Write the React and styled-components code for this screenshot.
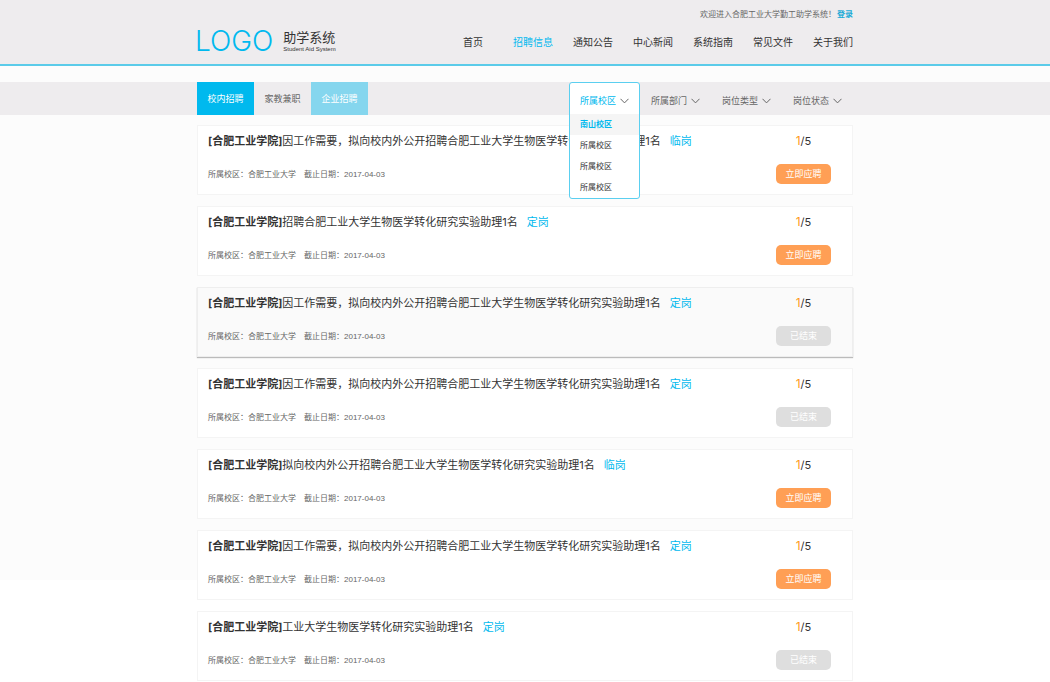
import React, { useState } from 'react';
import styled, { createGlobalStyle, css } from 'styled-components';

// styled-components
const GlobalStyle = createGlobalStyle`
  * {
    box-sizing: border-box;
  }

  body {
    margin: 0;
    background: #fff;
    color: #333;
    font-family: Inter, 'Noto Sans CJK SC', sans-serif;
    font-size: 8px;
  }

  h1, h2, p, ul {
    margin: 0;
    padding: 0;
    list-style: none;
    font-weight: 400;
  }

  a {
    color: inherit;
    text-decoration: none;
  }

  button, select {
    margin: 0;
    padding: 0;
    border: 0;
    font-family: inherit;
    cursor: pointer;
  }
`;

const Page = styled.div`
  background: linear-gradient(#fcfcfc 580px, #fff 580px);
`;

const Container = styled.div`
  width: 100%;
  max-width: 656px;
  margin: 0 auto;
`;

const Header = styled.header`
  background: #eeecee;
  border-bottom: 2px solid #5bcbe9;
`;

const HeaderInner = styled(Container)`
  display: flex;
  justify-content: space-between;
  align-items: flex-end;
  height: 64px;
`;

const Brand = styled.a`
  display: flex;
  align-items: center;
  gap: 10px;
  padding-bottom: 7px;
`;

const Logo = styled.span`
  margin-left: -2px;
  color: #00b9ee;
  font-size: 28px;
  font-weight: 300;
  line-height: 32px;
`;

const SiteName = styled.h1`
  font-size: 13px;
  line-height: 15px;
`;

const SiteSubName = styled.p`
  font-family: 'Liberation Sans', Arial, sans-serif;
  font-size: 6px;
  line-height: 8px;
`;

const HeaderRight = styled.div`
  display: flex;
  flex-direction: column;
  align-items: flex-end;
  gap: 14px;
  padding-bottom: 14px;
`;

const Welcome = styled.p`
  color: #666;
  line-height: 12px;
`;

const Login = styled.a`
  margin-left: 1px;
  color: #1aaad6;
  font-weight: 700;
`;

const Nav = styled.nav`
  display: flex;
  gap: 20px;
`;

const NavLink = styled.a`
  min-width: 40px;
  text-align: center;
  font-size: 10px;
  line-height: 16px;
  color: ${({ $active }) => ($active ? '#00b9ee' : '#333')};
`;

const FilterBar = styled.div`
  margin-top: 16px;
  background: #eeecee;
`;

const FilterInner = styled(Container)`
  display: flex;
  justify-content: space-between;
  height: 33px;
`;

const Group = styled.div`
  display: flex;
`;

const tabColors = {
  active: css`
    background: #00b9ee;
    color: #fff;
  `,
  hover: css`
    background: #85d6ee;
    color: #fff;
  `,
  normal: css`
    background: transparent;
    color: #666;
  `,
};

const Tab = styled.button`
  width: 57px;
  font-size: 9px;
  line-height: 33px;
  ${({ $state }) => tabColors[$state]}
`;

const Filter = styled.div`
  position: relative;
  display: flex;
  width: 71px;
  color: #666;
`;

const FilterSelect = styled.select`
  appearance: none;
  width: 100%;
  padding: 4px 11px 0;
  background: transparent;
  color: inherit;
  font-size: 9px;
`;

const ArrowIcon = styled.svg`
  position: absolute;
  top: 16px;
  right: 11px;
  z-index: 2;
  width: 9px;
  height: 6px;
  fill: none;
  stroke: #666;
  pointer-events: none;
`;

const Dropdown = styled.div`
  position: absolute;
  inset: 0 0 auto;
  z-index: 1;
  overflow: hidden;
  border: 1px solid #5bcff0;
  border-radius: 3px;
  background: #fff;
`;

const DropdownHead = styled.button`
  display: block;
  width: 100%;
  height: 31px;
  padding: 4px 10px 0;
  background: transparent;
  color: #00b9ee;
  font-size: 9px;
  text-align: left;
`;

const Option = styled.button`
  display: block;
  width: 100%;
  padding: 0 10px;
  background: ${({ $selected }) => ($selected ? '#f5f5f5' : 'transparent')};
  color: ${({ $selected }) => ($selected ? '#00b9ee' : '#333')};
  font-size: 8px;
  font-weight: ${({ $selected }) => ($selected ? 700 : 400)};
  line-height: 21px;
  text-align: left;
`;

const JobList = styled(Container).attrs({ as: 'ul' })`
  display: grid;
  gap: 11px;
  padding-top: 10px;
`;

const Card = styled.li`
  display: flex;
  justify-content: space-between;
  height: 70px;
  padding: 6px 21px 10px 10px;
  border: 1px solid #f4f4f4;
  background: #fff;

  ${({ $raised }) =>
    $raised &&
    css`
      border-color: #eee;
      background: #fafafa;
      box-shadow: 0 1px 1px 0 #bbb;
    `}
`;

const CardColumn = styled.div`
  display: flex;
  flex-direction: column;
  justify-content: space-between;
  align-items: ${({ $center }) => ($center ? 'center' : 'flex-start')};
`;

const Title = styled.h2`
  font-size: 11px;
  line-height: 18px;
`;

const School = styled.strong`
  font-weight: 700;
`;

const Tag = styled.span`
  margin-left: 9px;
  color: #00b9ee;
`;

const Info = styled.p`
  display: flex;
  gap: 8px;
  color: #666;
  font-family: 'Liberation Sans', 'Noto Sans CJK SC', sans-serif;
  line-height: 18px;
`;

const Count = styled.p`
  font-size: 11px;
  line-height: 18px;
`;

const Hired = styled.span`
  color: #ff9a1a;
  font-size: 12px;
`;

const ApplyButton = styled.button`
  width: 55px;
  border-radius: 5px;
  background: #ff9f55;
  color: #fff;
  font-size: 9px;
  line-height: 20px;

  &:disabled {
    background: #dedede;
    cursor: default;
  }
`;
// end styled-components

const navItems = ['首页', '招聘信息', '通知公告', '中心新闻', '系统指南', '常见文件', '关于我们'];

const tabs = [
  { name: '校内招聘', state: 'active' },
  { name: '家教兼职', state: 'normal' },
  { name: '企业招聘', state: 'hover' },
];

const campuses = ['南山校区', '所属校区', '所属校区', '所属校区'];

const filters = ['所属部门', '岗位类型', '岗位状态'];

const longTitle = '因工作需要，拟向校内外公开招聘合肥工业大学生物医学转化研究实验助理1名';

const jobs = [
  { title: longTitle, tag: '临岗', open: true },
  { title: '招聘合肥工业大学生物医学转化研究实验助理1名', tag: '定岗', open: true },
  { title: longTitle, tag: '定岗', open: false, raised: true },
  { title: longTitle, tag: '定岗', open: false },
  { title: '拟向校内外公开招聘合肥工业大学生物医学转化研究实验助理1名', tag: '临岗', open: true },
  { title: longTitle, tag: '定岗', open: true },
  { title: '工业大学生物医学转化研究实验助理1名', tag: '定岗', open: false },
];

const Arrow = () => (
  <ArrowIcon viewBox="0 0 9 6" aria-hidden="true">
    <path d="M0.5 0.8 L4.5 4.9 L8.5 0.8" />
  </ArrowIcon>
);

const CampusFilter = () => {
  const [open, setOpen] = useState(true);
  const [selected, setSelected] = useState(0);

  return (
    <Filter>
      <Dropdown>
        <DropdownHead aria-expanded={open} onClick={() => setOpen(!open)}>
          所属校区
        </DropdownHead>
        {open &&
          campuses.map((campus, index) => (
            <Option key={index} $selected={index === selected} onClick={() => setSelected(index)}>
              {campus}
            </Option>
          ))}
      </Dropdown>
      <Arrow />
    </Filter>
  );
};

const JobCard = ({ job }) => (
  <Card $raised={job.raised}>
    <CardColumn>
      <Title>
        <School>[合肥工业学院]</School>
        {job.title}
        <Tag>{job.tag}</Tag>
      </Title>
      <Info>
        <span>所属校区：合肥工业大学</span>
        <span>截止日期：2017-04-03</span>
      </Info>
    </CardColumn>
    <CardColumn $center>
      <Count>
        <Hired>1</Hired>/5
      </Count>
      <ApplyButton disabled={!job.open}>{job.open ? '立即应聘' : '已结束'}</ApplyButton>
    </CardColumn>
  </Card>
);

const App = () => {
  return (
    <Page>
      <GlobalStyle />
      <Header>
        <HeaderInner>
          <Brand href="#">
            <Logo>LOGO</Logo>
            <div>
              <SiteName>助学系统</SiteName>
              <SiteSubName>Student Aid System</SiteSubName>
            </div>
          </Brand>
          <HeaderRight>
            <Welcome>
              欢迎进入合肥工业大学勤工助学系统！<Login href="#">登录</Login>
            </Welcome>
            <Nav>
              {navItems.map(item => (
                <NavLink key={item} href="#" $active={item === '招聘信息'}>
                  {item}
                </NavLink>
              ))}
            </Nav>
          </HeaderRight>
        </HeaderInner>
      </Header>
      <FilterBar>
        <FilterInner>
          <Group>
            {tabs.map(tab => (
              <Tab key={tab.name} $state={tab.state}>
                {tab.name}
              </Tab>
            ))}
          </Group>
          <Group>
            <CampusFilter />
            {filters.map(name => (
              <Filter key={name}>
                <FilterSelect aria-label={name}>
                  <option>{name}</option>
                </FilterSelect>
                <Arrow />
              </Filter>
            ))}
          </Group>
        </FilterInner>
      </FilterBar>
      <JobList>
        {jobs.map((job, index) => (
          <JobCard key={index} job={job} />
        ))}
      </JobList>
    </Page>
  );
};

export default App;
